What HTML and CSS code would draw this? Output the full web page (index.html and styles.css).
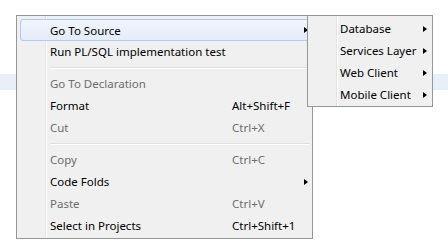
FILE: index.html
```html
<!DOCTYPE html>
<html>
  <head>
    <title>Editor Context Menu</title>
    <link rel="stylesheet" href="styles.css">
  </head>
  <body>
    <div class="editor">
      <div class="current-line"></div>
    </div>

    <div class="menu context-menu">
      <div class="menu-item active">
        <span class="label">Go To Source</span>
        <span class="shortcut"></span>
        <span class="arrow"></span>
      </div>
      <div class="menu-item">
        <span class="label">Run PL/SQL implementation test</span>
      </div>
      <div class="separator"></div>
      <div class="menu-item disabled">
        <span class="label">Go To Declaration</span>
      </div>
      <div class="menu-item">
        <span class="label">Format</span>
        <span class="shortcut">Alt+Shift+F</span>
      </div>
      <div class="menu-item disabled">
        <span class="label">Cut</span>
        <span class="shortcut">Ctrl+X</span>
      </div>
      <div class="separator"></div>
      <div class="menu-item disabled">
        <span class="label">Copy</span>
        <span class="shortcut">Ctrl+C</span>
      </div>
      <div class="menu-item">
        <span class="label">Code Folds</span>
        <span class="shortcut"></span>
        <span class="arrow"></span>
      </div>
      <div class="menu-item disabled">
        <span class="label">Paste</span>
        <span class="shortcut">Ctrl+V</span>
      </div>
      <div class="menu-item">
        <span class="label">Select in Projects</span>
        <span class="shortcut">Ctrl+Shift+1</span>
      </div>
    </div>

    <div class="menu sub-menu">
      <div class="menu-item">
        <span class="label">Database</span>
        <span class="arrow"></span>
      </div>
      <div class="menu-item">
        <span class="label">Services Layer</span>
        <span class="arrow"></span>
      </div>
      <div class="menu-item">
        <span class="label">Web Client</span>
        <span class="arrow"></span>
      </div>
      <div class="menu-item">
        <span class="label">Mobile Client</span>
        <span class="arrow"></span>
      </div>
    </div>
  </body>
</html>
```

FILE: styles.css
```css
body {
  margin: 0;
  background: #ffffff;
  font-family: 'Noto Sans', 'Open Sans', sans-serif;
  font-size: 11.5px;
  color: #000000;
}
.editor {
  height: 250px;
  padding-top: 74px;
  box-sizing: border-box;
}
.current-line {
  height: 16px;
  background: #e8eff9;
}
.menu {
  position: absolute;
  top: 15px;
  background: #f0f0f0;
  border: 1px solid #979797;
  box-sizing: border-box;
}
/* the icon gutter with its line */
.menu::before {
  content: '';
  position: absolute;
  top: 0;
  bottom: 0;
  left: 28px;
  width: 1px;
  background: #e2e3e3;
  border-right: 1px solid #ffffff;
}
.context-menu {
  left: 16px;
  width: 297px;
  padding: 3px 2px 1px 3px;
}
.sub-menu {
  left: 307px;
  width: 126px;
  padding: 2px 2px 0 2px;
}
.menu-item {
  position: relative;
  display: grid;
  grid-template-columns: 1fr 68px 10px;
  align-items: center;
  height: 22px;
  padding-left: 30px;
  padding-bottom: 1px;
  box-sizing: border-box;
  white-space: nowrap;
}
.sub-menu .menu-item {
  grid-template-columns: 1fr 11px;
}
.menu-item.active {
  border: 1px solid #aecbf0;
  border-radius: 3px;
  background: linear-gradient(#f1f5fb, #e4ecf8);
  padding-left: 29px;
  padding-bottom: 0;
  grid-template-columns: 1fr 68px 9px;
}
.menu-item.disabled {
  color: #6d6d6d;
}
.label {
  grid-column: 1;
}
.shortcut {
  grid-column: 2;
}
.arrow {
  grid-column: 3;
  width: 0;
  height: 0;
  margin-left: 4px;
  border-left: 4px solid #000000;
  border-top: 3.5px solid transparent;
  border-bottom: 3.5px solid transparent;
}
.sub-menu .arrow {
  grid-column: 2;
}
.separator {
  height: 1px;
  margin: 4px 0 4px 30px;
  background: #e0e0e0;
  border-bottom: 1px solid #ffffff;
}
```
